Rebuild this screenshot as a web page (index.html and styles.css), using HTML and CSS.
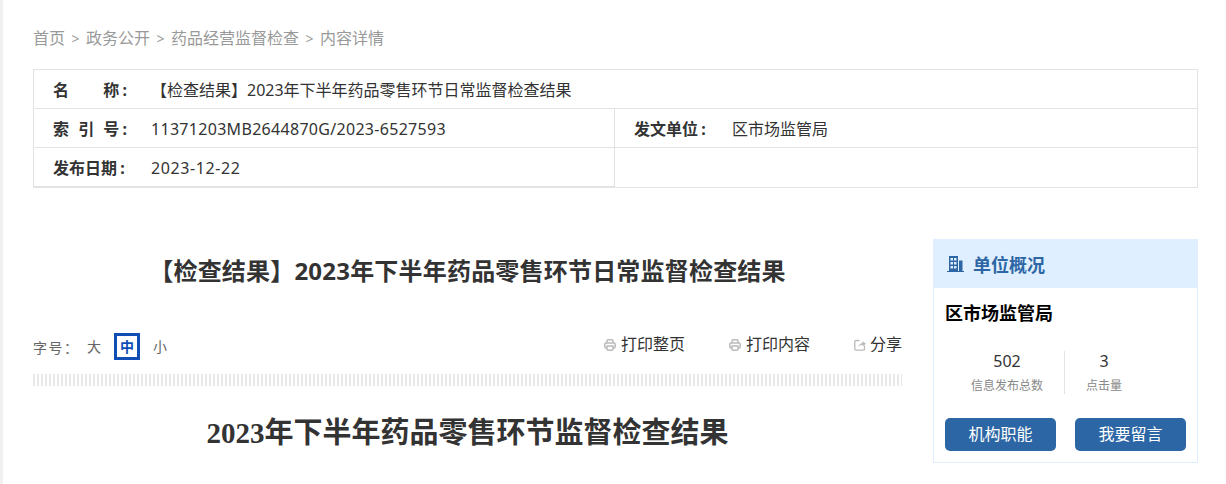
FILE: index.html
```html
<!DOCTYPE html>
<html lang="zh-CN">
<head>
  <meta charset="UTF-8">
  <meta name="viewport" content="width=device-width, initial-scale=1.0">
  <title>内容详情</title>
  <link rel="stylesheet" href="styles.css">
</head>
<body>
  <div class="container">
    <!-- 面包屑 -->
    <div class="crumb">
      <a>首页</a><span class="sep">&gt;</span><a>政务公开</a><span class="sep">&gt;</span><a>药品经营监督检查</a><span class="sep">&gt;</span><a>内容详情</a>
    </div>

    <!-- 信息表 -->
    <div class="info">
      <div class="info-row">
        <div class="cell cell-full"><b class="key key-name"><span>名</span><span>称 :</span></b><span class="val">【检查结果】2023年下半年药品零售环节日常监督检查结果</span></div>
      </div>
      <div class="info-row">
        <div class="cell cell-left"><b class="key key-name"><span>索</span><span>引</span><span>号 :</span></b><span class="val val-num">11371203MB2644870G/2023-6527593</span></div>
        <div class="cell cell-right"><b class="key">发文单位 :</b><span class="val">区市场监管局</span></div>
      </div>
      <div class="info-row info-row-last">
        <div class="cell cell-left cell-last"><b class="key">发布日期 :</b><span class="val val-date">2023-12-22</span></div>
        <div class="cell cell-right"></div>
      </div>
    </div>

    <div class="main">
      <div class="article">
        <h1>【检查结果】2023年下半年药品零售环节日常监督检查结果</h1>
        <div class="tools">
          <div class="size">
            <span class="size-label">字号：</span>
            <a>大</a><a class="on">中</a><a>小</a>
          </div>
          <div class="actions">
            <a class="act act-page">
              <svg class="ico" viewBox="0 0 12 12"><path d="M3 4V1.800q0-1 1-1h4q1 0 1 1V4M3 9H2q-1.200 0-1.200-1.200V5.200Q.8 4 2 4h8q1.200 0 1.200 1.200v2.600Q11.200 9 10 9H9M3 7h6v3.200q0 1-1 1H4q-1 0-1-1z" fill="none" stroke="#bbb" stroke-width="1.500"/></svg>
              打印整页
            </a>
            <a class="act act-text">
              <svg class="ico" viewBox="0 0 12 12"><path d="M3 4V1.800q0-1 1-1h4q1 0 1 1V4M3 9H2q-1.200 0-1.200-1.200V5.200Q.8 4 2 4h8q1.200 0 1.200 1.200v2.600Q11.200 9 10 9H9M3 7h6v3.200q0 1-1 1H4q-1 0-1-1z" fill="none" stroke="#bbb" stroke-width="1.500"/></svg>
              打印内容
            </a>
            <a class="act act-share">
              <svg class="ico" viewBox="0 0 12 12"><path d="M5.500 1.500H2Q.8 1.500.8 2.700V10q0 1.200 1.200 1.200h7.300q1.200 0 1.200-1.200V6.500" fill="none" stroke="#bbb" stroke-width="1.300"/><path d="M4.500 8Q5 4.500 8.500 4V2L12 4.800 8.500 7.500V5.800Q6 5.800 4.500 8z" fill="#bbb"/></svg>
              分享
            </a>
          </div>
        </div>
        <div class="stripes"></div>
        <h2>2023年下半年药品零售环节监督检查结果</h2>
      </div>

      <div class="side">
        <div class="side-head">
          <svg class="side-ico" viewBox="0 0 17 16"><path d="M2 0h9v15h1V4.500h3.500V15H17v1H0v-1h2zM3.500 2v2.500h2.500V2zm3.500 0v2.500h2.500V2zM3.500 6v2.500h2.500V6zM7 6v2.500h2.500V6zM3.500 10v2.500h2.500V10zM7 10v2.500h2.500V10z" fill="#2c66a4" fill-rule="evenodd"/></svg>
          单位概况
        </div>
        <div class="side-body">
          <div class="org">区市场监管局</div>
          <div class="stats">
            <div class="stat stat-a"><div class="num">502</div><div class="lbl">信息发布总数</div></div>
            <div class="stat stat-b"><div class="num">3</div><div class="lbl">点击量</div></div>
          </div>
          <div class="btns">
            <a class="btn">机构职能</a>
            <a class="btn">我要留言</a>
          </div>
        </div>
      </div>
    </div>
  </div>
</body>
</html>
```

FILE: styles.css
```css
html, body {
  height: 100%;
}
body {
  margin: 0;
  background-color: #fff;
  font-family: "Noto Sans", "Noto Sans CJK SC", sans-serif;
  color: #333;
  overflow: hidden;
}
.container {
  border-left: 3px solid #f0f0f0;
  padding: 0 28px 0 30px;
  height: 484px;
  box-sizing: border-box;
}

/* crumb */
.crumb {
  height: 69px;
  padding-top: 28px;
  box-sizing: border-box;
  font-size: 16px;
  line-height: 20px;
  color: #999;
  white-space: nowrap;
}
.crumb .sep {
  display: inline-block;
  width: 21px;
  text-align: center;
  font-size: 14px;
}

/* info table */
.info {
  border: 1px solid #e3e3e3;
  width: 1165px;
  box-sizing: border-box;
}
.info-row {
  display: flex;
  height: 39px;
  border-top: 1px solid #e3e3e3;
  box-sizing: border-box;
}
.info-row:first-child {
  height: 38px;
  border-top: none;
}
.info-row-last {
  height: 40px;
}
.cell {
  display: flex;
  align-items: center;
  font-size: 16px;
  line-height: 22px;
  padding: 2px 0 0 19px;
  box-sizing: border-box;
}
.cell-full {
  width: 100%;
}
.cell-left {
  width: 581px;
  border-right: 1px solid #e3e3e3;
}
.cell-last {
  border-bottom: 1px solid #e3e3e3;
}
.cell-right {
  flex: 1;
}
.key {
  width: 98px;
  color: #333;
  flex: none;
  white-space: nowrap;
  word-spacing: -1px;
}
.key-name {
  display: flex;
  justify-content: space-between;
  box-sizing: border-box;
  padding-right: 24px;
}
.val {
  color: #333;
  white-space: nowrap;
}
.val-num {
  letter-spacing: .3px;
}
.val-date {
  letter-spacing: .6px;
}

/* main */
.main {
  display: flex;
  justify-content: space-between;
  margin-top: 51px;
}
.article {
  width: 869px;
}
h1 {
  margin: 17px 0 0;
  font-size: 24px;
  line-height: 30px;
  font-weight: bold;
  text-align: center;
  color: #333;
  white-space: nowrap;
  letter-spacing: .2px;
}
.tools {
  display: flex;
  justify-content: space-between;
  align-items: flex-start;
  margin-top: 47px;
  height: 29px;
}
.size {
  display: flex;
  align-items: center;
  font-size: 14px;
  color: #666;
}
.size-label {
  width: 48px;
  letter-spacing: 1.5px;
}
.size a {
  display: block;
  width: 26px;
  height: 27px;
  line-height: 21px;
  border: 3px solid transparent;
  box-sizing: border-box;
  text-align: center;
  margin-right: 7px;
}
.size a.on {
  border-color: #0f4fb5;
  color: #0f4fb5;
  font-weight: bold;
}
.actions {
  display: flex;
  font-size: 16px;
  line-height: 22px;
  color: #333;
}
.act {
  display: flex;
  align-items: center;
  gap: 5px;
}
.act-page {
  margin-right: 44px;
}
.act-text {
  margin-right: 44px;
}
.act-share {
  gap: 4px;
}
.ico {
  width: 12px;
  height: 12px;
  margin-top: 1px;
}
.stripes {
  height: 12px;
  margin-top: 12px;
  background-image: repeating-linear-gradient(90deg, #e8e8e8 0 2px, #fff 2px 4px);
}
h2 {
  margin: 27px 0 0;
  font-family: "Liberation Serif", "Noto Sans CJK SC", serif;
  font-size: 29px;
  line-height: 40px;
  font-weight: bold;
  text-align: center;
  color: #333;
  white-space: nowrap;
}

/* sidebar */
.side {
  width: 265px;
  height: 224px;
  border: 1px solid #e0efff;
  box-sizing: border-box;
}
.side-head {
  display: flex;
  align-items: center;
  height: 48px;
  background-color: #e0efff;
  padding-left: 13px;
  font-size: 18px;
  font-weight: bold;
  color: #2c66a4;
}
.side-ico {
  width: 17px;
  height: 16px;
  margin-right: 9px;
}
.side-body {
  padding: 13px 11px 0;
}
.org {
  font-size: 18px;
  line-height: 24px;
  font-weight: bold;
  color: #000;
}
.stats {
  display: flex;
  margin-top: 26px;
  height: 43px;
}
.stat {
  text-align: center;
}
.stat-a {
  width: 114px;
  padding-left: 5px;
  border-right: 1px solid #e3e3e3;
  box-sizing: content-box;
}
.stat-b {
  width: 78px;
}
.num {
  font-size: 16px;
  line-height: 20px;
  color: #333;
}
.lbl {
  margin-top: 6px;
  font-size: 12px;
  line-height: 18px;
  color: #888;
}
.btns {
  display: flex;
  justify-content: space-between;
  margin-top: 24px;
}
.btn {
  display: block;
  width: 111px;
  height: 33px;
  line-height: 33px;
  border-radius: 5px;
  background-color: #2c66a4;
  color: #fff;
  font-size: 16px;
  text-align: center;
}
```
